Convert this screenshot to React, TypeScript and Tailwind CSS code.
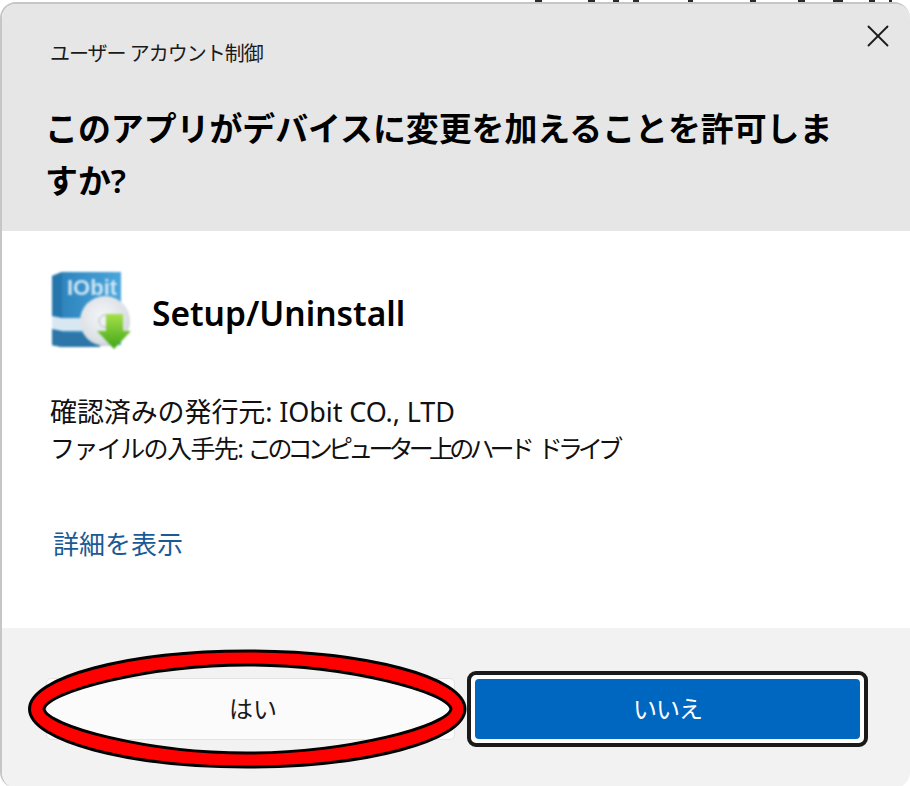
import React from 'react';
import { X } from 'lucide-react';

const font = "font-['Noto_Sans','Noto_Sans_CJK_JP',sans-serif]";

// green arrow / disc box logo, blurred a little like the low-res original
function AppIcon() {
  return (
    <svg width="84" height="84" viewBox="0 0 84 84" className="shrink-0 blur-[0.9px]">
      <defs>
        <linearGradient id="side" x1="0" y1="0" x2="1" y2="0">
          <stop offset="0" stopColor="#2a7fb8" />
          <stop offset="1" stopColor="#4aa6dc" />
        </linearGradient>
        <radialGradient id="disc" cx="0.45" cy="0.4" r="0.7">
          <stop offset="0" stopColor="#f4f6f8" />
          <stop offset="0.7" stopColor="#dce1e6" />
          <stop offset="1" stopColor="#bcc4cb" />
        </radialGradient>
        <linearGradient id="arrow" x1="0" y1="0" x2="0" y2="1">
          <stop offset="0" stopColor="#a6e04a" />
          <stop offset="1" stopColor="#3fa516" />
        </linearGradient>
      </defs>
      <path d="M2 7 L12 3 L71 3 L71 76 L12 78 L2 76 Z" fill="url(#side)" />
      <path d="M2 7 L12 3 L12 78 L2 76 Z" fill="#2576ad" />
      <path d="M2 47 L12 49 L56 49 L56 62 L12 62 L2 60 Z" fill="#d8e8f2" />
      <path d="M2 62 L12 64 L50 64 L50 78 L12 78 L2 76 Z" fill="#2c76a8" />
      <text x="17" y="26" fontFamily="Liberation Sans, sans-serif" fontWeight="700" fontSize="22" fill="#cfe6f6">
        IObit
      </text>
      <circle cx="55" cy="52" r="25" fill="url(#disc)" />
      <circle cx="55" cy="52" r="6" fill="#eef1f3" stroke="#b0b8bf" />
      <path d="M56 45 L73 45 L73 62 L81 62 L64 80 L47 62 L56 62 Z" fill="url(#arrow)" />
    </svg>
  );
}

// hand-drawn red marker around the yes button
function RedRing() {
  return (
    <svg width="440" height="122" viewBox="0 0 440 122" className="absolute left-[27px] top-[648px]">
      <path
        fillRule="evenodd"
        fill="#ff0000"
        stroke="#000000"
        strokeWidth="3"
        d="M2.5 61 C2.5 29 102 3 220 3 C338 3 438 29 438 61 C438 93 338 119 220 119 C102 119 2.5 93 2.5 61 Z M17 61 C20 44 120 17 220 17 C320 17 421 44 424 61 C421 78 320 105 220 105 C120 105 20 78 17 61 Z"
      />
    </svg>
  );
}

// fragments of whatever sits behind the dialog, cut off by its top edge
const behindBits = [[535, 7], [588, 7], [613, 6], [633, 6], [688, 5], [750, 6], [798, 7], [833, 10], [869, 6], [889, 3]];

export default function App() {
  return (
    <div className={`relative h-[786px] w-[910px] overflow-hidden bg-white pt-[2px] ${font}`}>
      {behindBits.map(([x, w]) => (
        <span key={x} className="absolute top-0 h-[2px] bg-[#2a2a2a]" style={{ left: x, width: w }} />
      ))}
      <div className="flex h-[786px] w-[910px] flex-col overflow-hidden rounded-[16px] border-l-2 border-t-2 border-[#c6c6c6] text-black">
        {/* Header */}
        <div className="flex h-[227px] shrink-0 flex-col bg-[#e6e6e6]">
          <div className="flex items-start justify-between">
            <div className="pl-[48px] pt-[35px] text-[20px] leading-[30px] tracking-[-1px] text-[#1a1a1a]">
              ユーザー アカウント制御
            </div>
            <X className="mr-[13px] mt-[13px] h-[38px] w-[38px] text-[#1a1a1a]" strokeWidth={1.15} />
          </div>
          <h1 className="mt-[34px] pl-[43px] pr-[60px] text-[32.9px] font-semibold leading-[52px] text-black">
            このアプリがデバイスに変更を加えることを許可しますか?
          </h1>
        </div>

        {/* Body */}
        <div className="flex h-[397px] shrink-0 flex-col bg-white pl-[48px]">
          <div className="mt-[38px] flex items-center gap-[18px]">
            <AppIcon />
            <span className="pt-[4px] text-[33.5px] font-semibold leading-[44px] text-black">Setup/Uninstall</span>
          </div>
          <div className="mt-[40px] text-[#111111]">
            <p className="text-[27px] leading-[37px] tracking-[-0.1px]">確認済みの発行元: IObit CO., LTD</p>
            <p className="text-[25px] leading-[37px]">
              <span className="tracking-[-1.6px]">ファイルの入手先: </span>
              <span className="tracking-[-4.8px] [word-spacing:6px]">このコンピューター上のハード ドライブ</span>
            </p>
          </div>
          <a className="ml-[3px] mt-[59px] text-[26px] leading-[36px] text-[#1a5a96]">詳細を表示</a>
        </div>

        {/* Footer */}
        <div className="flex flex-1 items-start gap-[12px] bg-[#f2f2f2] pl-[44px] pt-[50px]">
          <button className="h-[62px] w-[409px] rounded-[5px] border border-[#e4e4e4] bg-[#fbfbfb] pl-[5px] text-[24px] text-[#1a1a1a]">
            はい
          </button>
          <button className="-mt-[7px] h-[76px] w-[401px] rounded-[9px] border-4 border-[#1a1a1a] bg-white p-[4px]">
            <span className="flex h-full w-full items-center justify-center rounded-[4px] bg-[#0067c0] text-[24px] tracking-[-1px] text-white">
              いいえ
            </span>
          </button>
        </div>
      </div>
      <RedRing />
    </div>
  );
}
